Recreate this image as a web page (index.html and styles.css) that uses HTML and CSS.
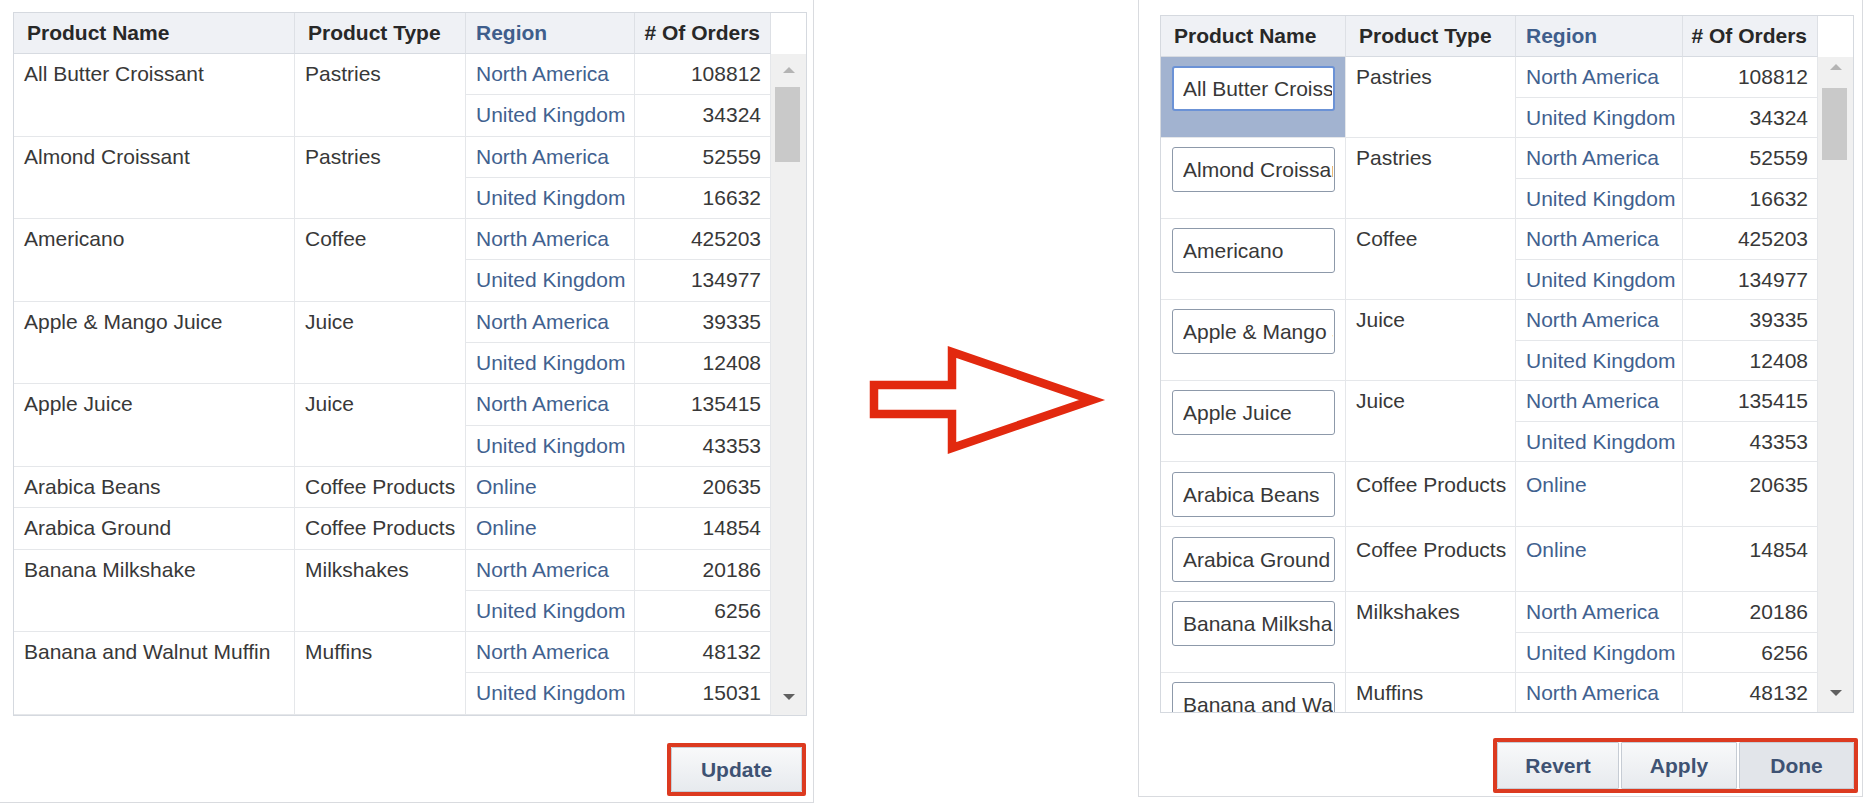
FILE: index.html
```html
<!DOCTYPE html>
<html lang="en">
<head>
<meta charset="utf-8">
<title>Table edit</title>
<link rel="stylesheet" href="styles.css">
</head>
<body>
<div class="page">

  <section class="panel panel-left">
    <div class="tbl tl">
      <div class="thead">
        <div class="h">Product Name</div>
        <div class="h">Product Type</div>
        <div class="h h-link">Region</div>
        <div class="h h-num"># Of Orders</div>
        <div class="h corner"></div>
      </div>
      <div class="tbody">
        <div class="rows">
          <div class="grp g2"><div class="c name">All Butter Croissant</div><div class="c type">Pastries</div><div class="c reg">North America</div><div class="c num">108812</div><div class="c reg">United Kingdom</div><div class="c num">34324</div></div>
          <div class="grp g2"><div class="c name">Almond Croissant</div><div class="c type">Pastries</div><div class="c reg">North America</div><div class="c num">52559</div><div class="c reg">United Kingdom</div><div class="c num">16632</div></div>
          <div class="grp g2"><div class="c name">Americano</div><div class="c type">Coffee</div><div class="c reg">North America</div><div class="c num">425203</div><div class="c reg">United Kingdom</div><div class="c num">134977</div></div>
          <div class="grp g2"><div class="c name">Apple &amp; Mango Juice</div><div class="c type">Juice</div><div class="c reg">North America</div><div class="c num">39335</div><div class="c reg">United Kingdom</div><div class="c num">12408</div></div>
          <div class="grp g2"><div class="c name">Apple Juice</div><div class="c type">Juice</div><div class="c reg">North America</div><div class="c num">135415</div><div class="c reg">United Kingdom</div><div class="c num">43353</div></div>
          <div class="grp"><div class="c name">Arabica Beans</div><div class="c type">Coffee Products</div><div class="c reg">Online</div><div class="c num">20635</div></div>
          <div class="grp"><div class="c name">Arabica Ground</div><div class="c type">Coffee Products</div><div class="c reg">Online</div><div class="c num">14854</div></div>
          <div class="grp g2"><div class="c name">Banana Milkshake</div><div class="c type">Milkshakes</div><div class="c reg">North America</div><div class="c num">20186</div><div class="c reg">United Kingdom</div><div class="c num">6256</div></div>
          <div class="grp g2"><div class="c name">Banana and Walnut Muffin</div><div class="c type">Muffins</div><div class="c reg">North America</div><div class="c num">48132</div><div class="c reg">United Kingdom</div><div class="c num">15031</div></div>
        </div>
        <div class="vscroll">
          <span class="arr-up"></span>
          <span class="thumb"></span>
          <span class="fill"></span>
          <span class="arr-down"></span>
        </div>
      </div>
    </div>
    <div class="foot">
      <div class="hl">
        <button class="btn btn-update" type="button">Update</button>
      </div>
    </div>
  </section>

  <div class="mid">
    <svg class="arrow" width="324" height="812" viewBox="0 0 324 812" aria-hidden="true">
      <polygon points="60,385 138,385 138,352 278,400 138,448 138,414 60,414" fill="none" stroke="#e2290f" stroke-width="8.5" stroke-linejoin="miter"/>
    </svg>
  </div>

  <section class="panel panel-right">
    <div class="tbl tr">
      <div class="thead">
        <div class="h">Product Name</div>
        <div class="h">Product Type</div>
        <div class="h h-link">Region</div>
        <div class="h h-num"># Of Orders</div>
        <div class="h corner"></div>
      </div>
      <div class="tbody">
        <div class="rows">
          <div class="grp g2"><div class="c name sel"><input class="inp focus" type="text" value="All Butter Croissant"></div><div class="c type">Pastries</div><div class="c reg">North America</div><div class="c num">108812</div><div class="c reg">United Kingdom</div><div class="c num">34324</div></div>
          <div class="grp g2"><div class="c name"><input class="inp" type="text" value="Almond Croissant"></div><div class="c type">Pastries</div><div class="c reg">North America</div><div class="c num">52559</div><div class="c reg">United Kingdom</div><div class="c num">16632</div></div>
          <div class="grp g2"><div class="c name"><input class="inp" type="text" value="Americano"></div><div class="c type">Coffee</div><div class="c reg">North America</div><div class="c num">425203</div><div class="c reg">United Kingdom</div><div class="c num">134977</div></div>
          <div class="grp g2"><div class="c name"><input class="inp" type="text" value="Apple &amp; Mango Juice"></div><div class="c type">Juice</div><div class="c reg">North America</div><div class="c num">39335</div><div class="c reg">United Kingdom</div><div class="c num">12408</div></div>
          <div class="grp g2"><div class="c name"><input class="inp" type="text" value="Apple Juice"></div><div class="c type">Juice</div><div class="c reg">North America</div><div class="c num">135415</div><div class="c reg">United Kingdom</div><div class="c num">43353</div></div>
          <div class="grp tall"><div class="c name"><input class="inp" type="text" value="Arabica Beans"></div><div class="c type">Coffee Products</div><div class="c reg">Online</div><div class="c num">20635</div></div>
          <div class="grp tall"><div class="c name"><input class="inp" type="text" value="Arabica Ground"></div><div class="c type">Coffee Products</div><div class="c reg">Online</div><div class="c num">14854</div></div>
          <div class="grp g2"><div class="c name"><input class="inp" type="text" value="Banana Milkshake"></div><div class="c type">Milkshakes</div><div class="c reg">North America</div><div class="c num">20186</div><div class="c reg">United Kingdom</div><div class="c num">6256</div></div>
          <div class="grp g2"><div class="c name"><input class="inp" type="text" value="Banana and Walnut Muffin"></div><div class="c type">Muffins</div><div class="c reg">North America</div><div class="c num">48132</div><div class="c reg">United Kingdom</div><div class="c num">15031</div></div>
        </div>
        <div class="vscroll">
          <span class="arr-up"></span>
          <span class="thumb"></span>
          <span class="fill"></span>
          <span class="arr-down"></span>
        </div>
      </div>
    </div>
    <div class="foot">
      <div class="hl hl-group">
        <button class="btn btn-revert" type="button">Revert</button>
        <button class="btn btn-apply" type="button">Apply</button>
        <button class="btn btn-done" type="button">Done</button>
      </div>
    </div>
  </section>

</div>
</body>
</html>
```

FILE: styles.css
```css
* { box-sizing: border-box; }

html, body {
  margin: 0;
  padding: 0;
  background: #ffffff;
  overflow: hidden;
}

body {
  font-family: "Liberation Sans", Arial, sans-serif;
  font-size: 21px;
  color: #383838;
}

.page {
  display: flex;
  align-items: flex-start;
  width: 1874px;
  height: 812px;
}

/* ---------- panels ---------- */
.panel {
  display: flex;
  flex-direction: column;
  align-items: flex-start;
  background: #ffffff;
  border-color: #d9dbdf;
  border-style: solid;
  border-width: 0;
}

.panel-left {
  width: 814px;
  height: 803px;
  border-right-width: 1px;
  border-bottom-width: 1px;
  padding: 12px 7px 0 13px;
}

.panel-right {
  width: 725px;
  height: 797px;
  border-left-width: 1px;
  border-right-width: 1px;
  border-bottom-width: 1px;
  padding: 15px 4px 0 21px;
}

.mid {
  width: 324px;
  height: 812px;
  flex: none;
}

.arrow { display: block; }

/* ---------- table ---------- */
.tbl {
  border-top: 1px solid #d5d9df;
  border-left: 1px solid #d5d9df;
}

.thead {
  display: grid;
  height: 41px;
}

.tl .grp { grid-template-columns: 281px 171px 169px 136px; }
.tl .thead { grid-template-columns: 281px 171px 169px 136px 36px; }
.tr .grp { grid-template-columns: 185px 170px 167px 135px; }
.tr .thead { grid-template-columns: 185px 170px 167px 135px 36px; }

.h {
  background: #eff1f5;
  border-right: 1px solid #dde0e5;
  border-bottom: 1px solid #d7dbe1;
  font-weight: bold;
  color: #282828;
  line-height: 40px;
  padding: 0 11px 0 13px;
  white-space: nowrap;
}

.h-link { color: #3f5e8c; padding-left: 10px; }
.h-num { text-align: right; padding-right: 10px; padding-left: 0; }

.h.corner {
  background: #ffffff;
  border-right: 1px solid #d5d9df;
  border-bottom: 0;
}

.tbody {
  display: flex;
  border-bottom: 1px solid #d5d9df;
}

.rows {
  overflow: hidden;
}

.tl .rows { width: 757px; height: 661px; }
.tr .rows { width: 657px; height: 655px; }

.grp { display: grid; }
.tl .grp { grid-auto-rows: 41.3px; }
.tr .grp { grid-auto-rows: 40.5px; }
.tr .grp.tall { grid-auto-rows: 65px; }

.g2 .name, .g2 .type { grid-row: span 2; }

.c {
  border-right: 1px solid #e5e7ea;
  border-bottom: 1px solid #e5e7ea;
  white-space: nowrap;
  overflow: hidden;
  padding: 0 10px;
}

.tl .c { line-height: 40.3px; }
.tr .c { line-height: 39.5px; }
.tr .tall .c { padding-top: 3px; }

.reg { color: #41618f; }
.num { text-align: right; padding-right: 9px; }

/* inputs in the editable table */
.tr .name {
  padding: 9px 0 0 11px;
  line-height: normal;
}
.tr .tall .name { padding-top: 10px; }

.name.sel { background: #a2b3d0; }

.inp {
  display: block;
  width: 163px;
  height: 45px;
  margin: 0;
  padding: 0 1px 0 10px;
  border: 1px solid #8d99aa;
  border-radius: 3px;
  background: #ffffff;
  font-family: "Liberation Sans", Arial, sans-serif;
  font-size: 21px;
  color: #383838;
  outline: none;
}

.inp.focus {
  border: 2px solid #6b92d6;
  padding-left: 9px;
}

/* ---------- scrollbar ---------- */
.vscroll {
  width: 36px;
  display: flex;
  flex-direction: column;
  align-items: center;
  background: #f0f0f0;
  border-right: 1px solid #d5d9df;
}

.tl .vscroll { height: 661px; padding: 13px 0 15px; }
.tr .vscroll { height: 655px; padding: 7px 0 16px; }

.arr-up {
  width: 0;
  height: 0;
  border-left: 6px solid transparent;
  border-right: 6px solid transparent;
  border-bottom: 6px solid #b4b4b4;
}

.arr-down {
  width: 0;
  height: 0;
  border-left: 6px solid transparent;
  border-right: 6px solid transparent;
  border-top: 6px solid #606060;
}

.thumb {
  width: 25px;
  background: #c9c9c9;
  margin-left: -2px;
}
.tl .thumb { margin-top: 14px; height: 75px; }
.tr .thumb { margin-top: 18px; height: 72px; }

.fill { flex: 1; }

/* ---------- footer / buttons ---------- */
.foot {
  align-self: stretch;
  display: flex;
  justify-content: flex-end;
}

.panel-left .foot { margin-top: 27px; }
.panel-right .foot { margin-top: 25px; }

.hl {
  display: flex;
  border: 4px solid #dc3a20;
  border-radius: 2px;
  background: #ffffff;
}

.panel-left .hl { width: 139px; height: 53px; }
.panel-right .hl { width: 365px; height: 55px; gap: 2px; }

.btn {
  height: 100%;
  margin: 0;
  padding: 0;
  border: 1px solid #c6ccd4;
  border-radius: 1px;
  background: linear-gradient(#f8f9fa, #e7eaee);
  font-family: "Liberation Sans", Arial, sans-serif;
  font-size: 21px;
  font-weight: bold;
  color: #3e5273;
  cursor: pointer;
}

.btn-update { width: 100%; }
.btn-revert { width: 122px; }
.btn-apply { width: 116px; }
.btn-done { width: 115px; background: #e2e5ea; }
```
